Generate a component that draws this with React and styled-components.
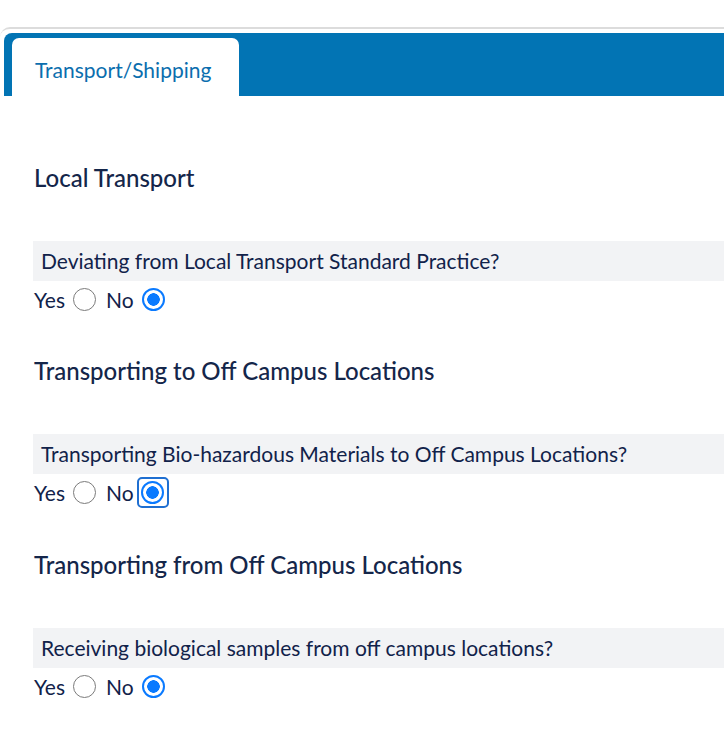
import React, { useState } from 'react'
import styled, { createGlobalStyle } from 'styled-components'

const GlobalStyle = createGlobalStyle`
  body {
    margin: 0;
    background: #fff;
    font-family: Lato, "Open Sans", sans-serif;
  }
`

const Page = styled.div`
  padding-top: 27px;
  width: 724px;
  overflow: hidden;
`

const Panel = styled.div`
  border-top: 2px solid #dcdcdc;
  border-top-left-radius: 10px;
  padding: 4px 0 0 4px;
`

const TabBar = styled.div`
  display: flex;
  align-items: flex-end;
  height: 63px;
  padding-left: 8px;
  background: #0274b4;
  border-top-left-radius: 8px;
`

const Tab = styled.div`
  display: flex;
  align-items: center;
  width: 227px;
  height: 58px;
  box-sizing: border-box;
  padding: 4px 0 0 23px;
  background: #fff;
  border-radius: 7px 7px 0 0;
  color: #0b6eae;
  font-size: 21px;
`

const Content = styled.div`
  display: flex;
  flex-direction: column;
  padding: 67px 0 0 29px;
`

const Section = styled.section`
  display: flex;
  flex-direction: column;
  margin-bottom: 43px;
`

const Heading = styled.h3`
  margin: 0 0 48px 1px;
  font-size: 24px;
  line-height: 30px;
  font-weight: 500;
  color: #14264a;
`

const Question = styled.div`
  height: 40px;
  line-height: 40px;
  padding-left: 8px;
  background: #f2f3f5;
  font-size: 21px;
  color: #11224a;
`

const RadioRow = styled.div`
  display: flex;
  align-items: center;
  min-height: 28px;
  margin: 4px 0 0 1px;
  font-size: 21px;
  color: #11224a;
`

const Option = styled.label`
  display: flex;
  align-items: center;
  gap: 8px;
  margin-right: 10px;
`

const Radio = styled.input`
  appearance: none;
  margin: 0;
  width: 23px;
  height: 23px;
  border-radius: 50%;
  border: 1.5px solid #7b7b7b;
  background: #fff;
  box-sizing: border-box;

  &:checked {
    border: 2px solid #0a7aff;
    background: radial-gradient(circle, #0a7aff 0 6px, #fff 6.5px);
  }
`

const FocusBox = styled.span`
  display: flex;
  align-items: center;
  justify-content: center;
  width: 32px;
  height: 31px;
  margin: -1px 0 -1px -5px;
  box-sizing: border-box;
  border: 2.5px solid #1f6fd1;
  border-radius: 5px;
`

const sections = [
  {
    title: 'Local Transport',
    question: 'Deviating from Local Transport Standard Practice?',
    focused: false
  },
  {
    title: 'Transporting to Off Campus Locations',
    question: 'Transporting Bio-hazardous Materials to Off Campus Locations?',
    focused: true
  },
  {
    title: 'Transporting from Off Campus Locations',
    question: 'Receiving biological samples from off campus locations?',
    focused: false
  }
]

const App = () => {
  const [answers, setAnswers] = useState(['no', 'no', 'no'])

  const pick = (i, value) => {
    const next = [...answers]
    next[i] = value
    setAnswers(next)
  }

  return (
    <Page>
      <GlobalStyle />
      <Panel>
        <TabBar>
          <Tab>Transport/Shipping</Tab>
        </TabBar>
        <Content>
          {sections.map((s, i) => {
            const noRadio = (
              <Radio
                type='radio'
                name={`q${i}`}
                checked={answers[i] === 'no'}
                onChange={() => pick(i, 'no')}
              />
            )
            return (
              <Section key={s.title}>
                <Heading>{s.title}</Heading>
                <Question>{s.question}</Question>
                <RadioRow>
                  <Option>
                    Yes
                    <Radio
                      type='radio'
                      name={`q${i}`}
                      checked={answers[i] === 'yes'}
                      onChange={() => pick(i, 'yes')}
                    />
                  </Option>
                  <Option>
                    No
                    {s.focused ? <FocusBox>{noRadio}</FocusBox> : noRadio}
                  </Option>
                </RadioRow>
              </Section>
            )
          })}
        </Content>
      </Panel>
    </Page>
  )
}

export default App
